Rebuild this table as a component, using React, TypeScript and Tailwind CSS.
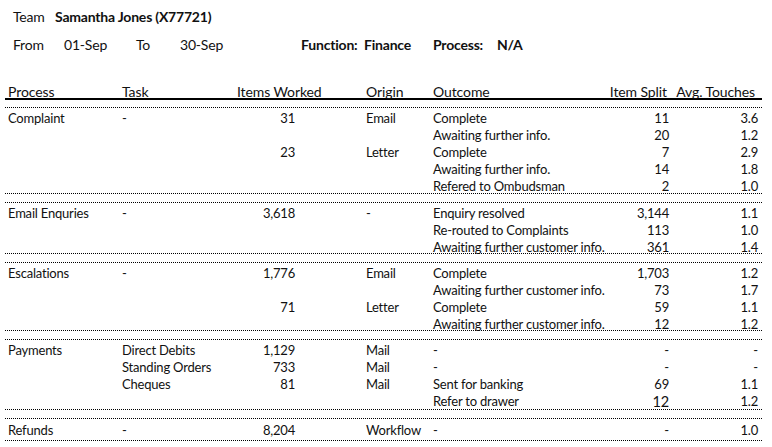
type Row = {
  process?: string
  task?: string
  items?: string
  origin?: string
  outcome: string
  split: string
  avg: string
  big?: boolean
}

type Section = { rows: Row[]; lastH: string }

const sections: Section[] = [
  {
    lastH: 'h-[16px]',
    rows: [
      { process: 'Complaint', task: '-', items: '31', origin: 'Email', outcome: 'Complete', split: '11', avg: '3.6' },
      { outcome: 'Awaiting further info.', split: '20', avg: '1.2' },
      { items: '23', origin: 'Letter', outcome: 'Complete', split: '7', avg: '2.9' },
      { outcome: 'Awaiting further info.', split: '14', avg: '1.8' },
      { outcome: 'Refered to Ombudsman', split: '2', avg: '1.0' },
    ],
  },
  {
    lastH: 'h-[15px]',
    rows: [
      { process: 'Email Enquries', task: '-', items: '3,618', origin: '-', outcome: 'Enquiry resolved', split: '3,144', avg: '1.1' },
      { outcome: 'Re-routed to Complaints', split: '113', avg: '1.0' },
      { outcome: 'Awaiting further customer info.', split: '361', avg: '1.4' },
    ],
  },
  {
    lastH: 'h-[15px]',
    rows: [
      { process: 'Escalations', task: '-', items: '1,776', origin: 'Email', outcome: 'Complete', split: '1,703', avg: '1.2' },
      { outcome: 'Awaiting further customer info.', split: '73', avg: '1.7' },
      { items: '71', origin: 'Letter', outcome: 'Complete', split: '59', avg: '1.1' },
      { outcome: 'Awaiting further customer info.', split: '12', avg: '1.2' },
    ],
  },
  {
    lastH: 'h-[17px]',
    rows: [
      { process: 'Payments', task: 'Direct Debits', items: '1,129', origin: 'Mail', outcome: '-', split: '-', avg: '-' },
      { task: 'Standing Orders', items: '733', origin: 'Mail', outcome: '-', split: '-', avg: '-' },
      { task: 'Cheques', items: '81', origin: 'Mail', outcome: 'Sent for banking', split: '69', avg: '1.1' },
      { outcome: 'Refer to drawer', split: '12', avg: '1.2', big: true },
    ],
  },
  {
    lastH: 'h-[20px] pt-[1px]',
    rows: [
      { process: 'Refunds', task: '-', items: '8,204', origin: 'Workflow', outcome: '-', split: '-', avg: '1.0' },
    ],
  },
]

function DataRow({ row, h }: { row: Row; h: string }) {
  return (
    <div className={`flex ${h} leading-[19px] whitespace-nowrap`}>
      <div className="w-[114px]">{row.process}</div>
      <div className="w-[115px]">{row.task}</div>
      <div className="w-[58px] text-right">{row.items}</div>
      <div className="w-[71px]" />
      <div className="w-[67px]">{row.origin}</div>
      <div className="w-[182px]">{row.outcome}</div>
      <div className={`w-[54px] text-right ${row.big ? 'text-[14.5px]' : ''}`}>{row.split}</div>
      <div className="w-[89px] text-right">{row.avg}</div>
    </div>
  )
}

export default function App() {
  return (
    <div className="w-[772px] h-[447px] bg-white text-[#111] font-['Lato',sans-serif] overflow-hidden">
      <div className="pt-[6px] pl-[13px] text-[14px] tracking-[-0.2px]">
        <div className="flex h-[20px] items-center">
          <span className="w-[42px]">Team</span>
          <span className="font-bold">Samantha Jones (X77721)</span>
        </div>
        <div className="flex h-[20px] items-center mt-[8px]">
          <span className="w-[51px]">From</span>
          <span className="w-[72px]">01-Sep</span>
          <span className="w-[44px]">To</span>
          <span className="w-[121px]">30-Sep</span>
          <span className="w-[63px] font-bold">Function:</span>
          <span className="w-[69px] font-bold">Finance</span>
          <span className="w-[64px] font-bold">Process:</span>
          <span className="font-bold">N/A</span>
        </div>
      </div>

      <div className="ml-[5px] w-[757px] mt-[29px]">
        <div className="flex h-[17px] leading-[18px] pl-[3px] text-[14px] tracking-[-0.1px] border-b-2 border-black whitespace-nowrap">
          <div className="w-[114px]">Process</div>
          <div className="w-[115px]">Task</div>
          <div className="w-[129px]">Items Worked</div>
          <div className="w-[67px]">Origin</div>
          <div className="w-[174px]">Outcome</div>
          <div className="w-[60px] text-right">Item Split</div>
          <div className="w-[88px] text-right">Avg. Touches</div>
        </div>

        <div className="flex flex-col gap-[8px] mt-[7px] text-[13px] tracking-[-0.2px]">
          {sections.map((s, i) => (
            <div key={i} className="border-y border-dotted border-black pl-[3px] pt-[1px]">
              {s.rows.map((r, j) => (
                <DataRow key={j} row={r} h={j === s.rows.length - 1 ? s.lastH : 'h-[17px]'} />
              ))}
            </div>
          ))}
        </div>
      </div>
    </div>
  )
}
